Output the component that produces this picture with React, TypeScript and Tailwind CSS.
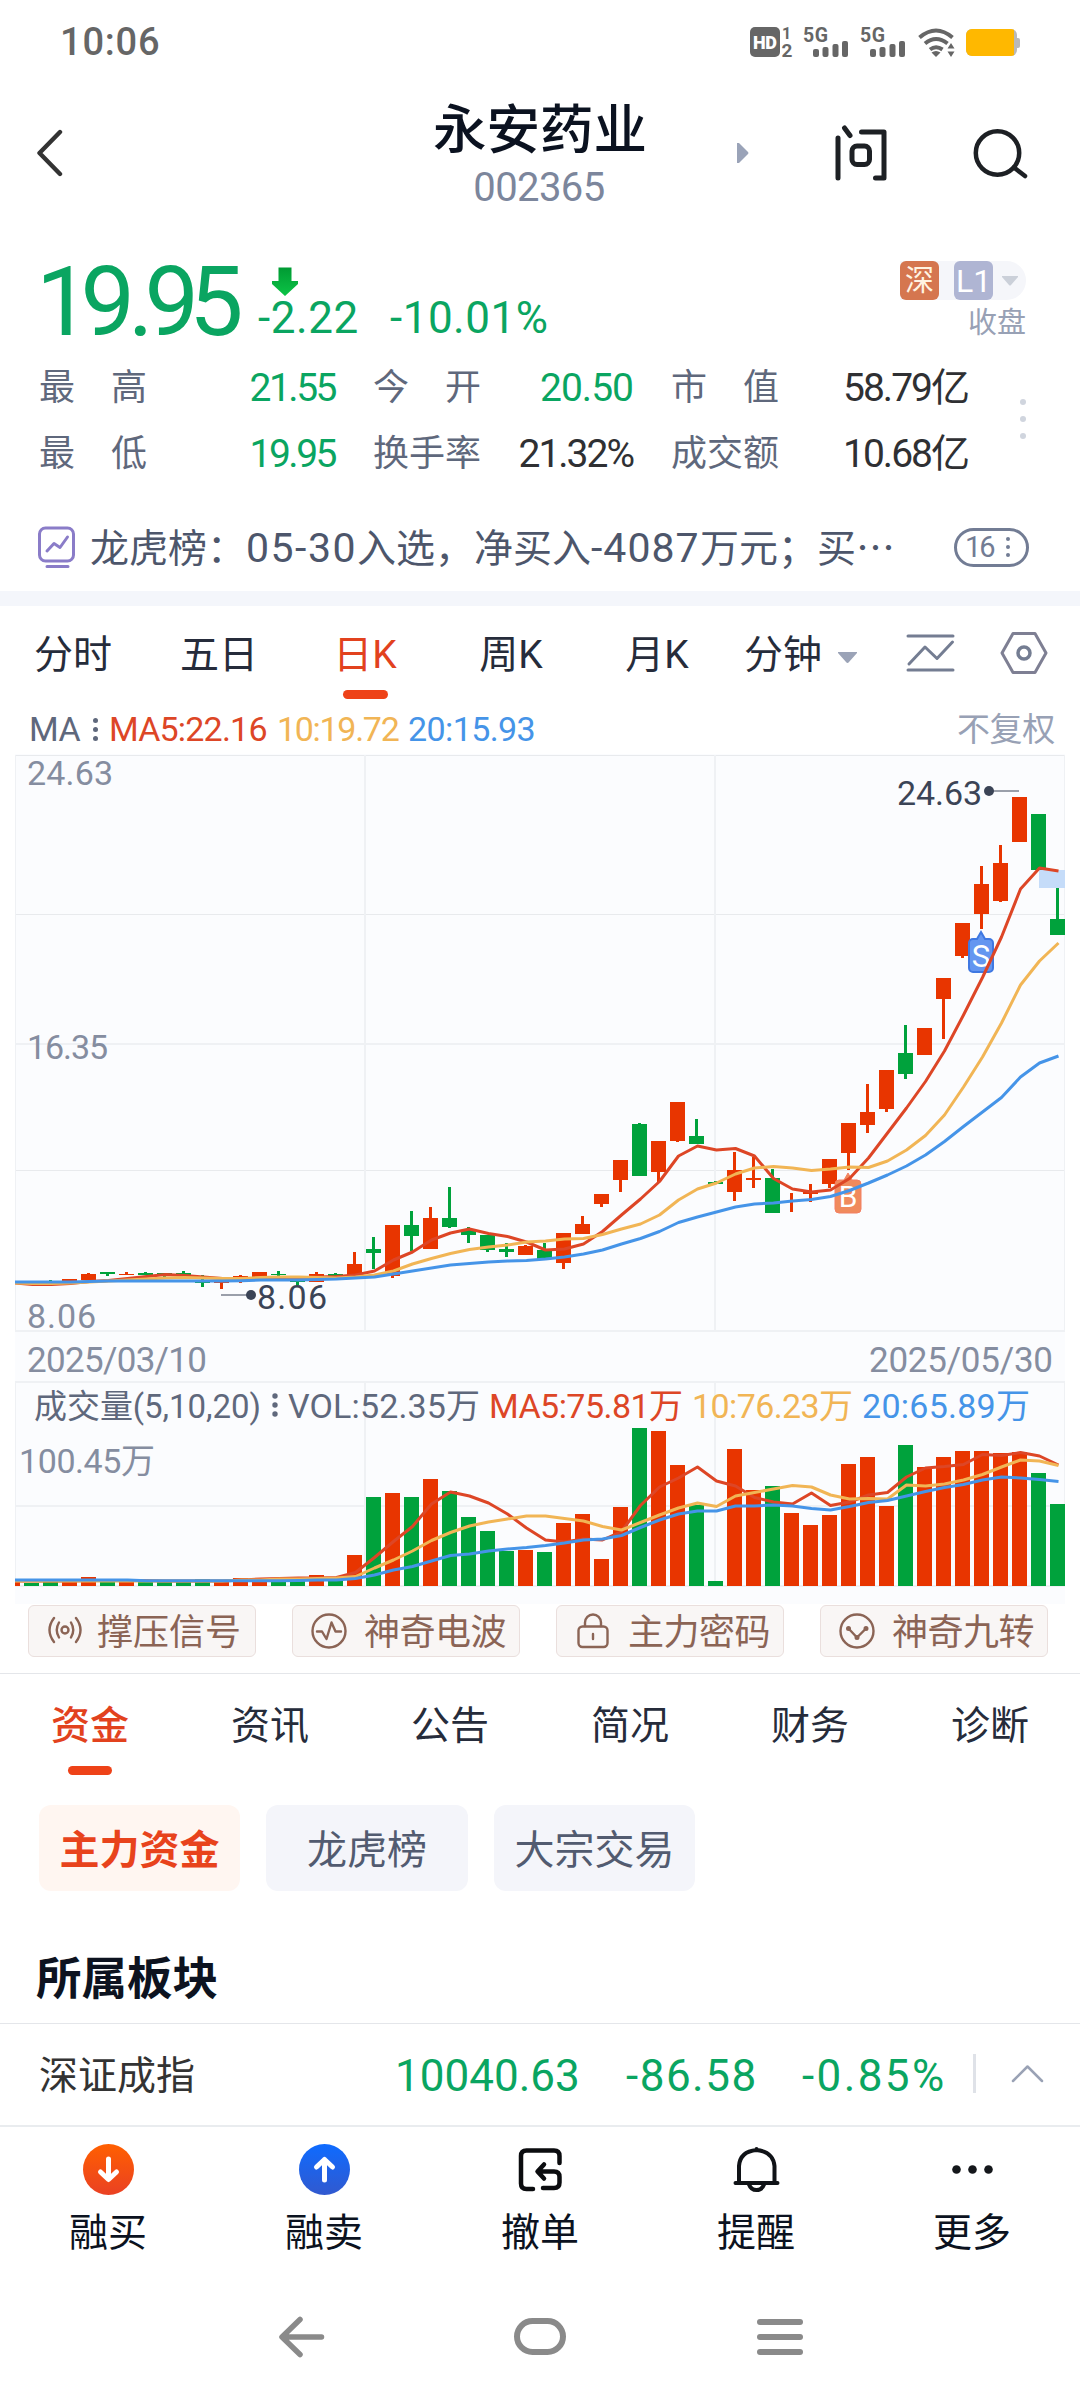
import type { ReactNode } from "react";

type Dir = "r" | "g";
// direction, high, body top, body bottom, low (all in chart y units)
type Candle = [Dir, number, number, number, number];

const UP = "#e83500";
const DOWN = "#00a23c";
const MA5 = "#dd4626";
const MA10 = "#f1b555";
const MA20 = "#4594e8";

const candles: Candle[] = [
  ["r", 1281, 1281, 1283, 1283], ["g", 1281, 1281, 1283, 1283], ["g", 1280, 1281, 1283, 1283], ["r", 1279, 1279, 1283, 1284],
  ["r", 1273, 1274, 1280, 1280], ["g", 1272, 1272, 1274, 1276], ["r", 1272, 1274, 1275, 1275], ["g", 1272, 1273, 1275, 1275],
  ["g", 1273, 1273, 1275, 1277], ["g", 1271, 1273, 1275, 1275], ["g", 1275, 1281, 1283, 1287], ["r", 1281, 1281, 1283, 1289],
  ["r", 1275, 1276, 1278, 1283], ["r", 1272, 1272, 1277, 1277], ["g", 1271, 1274, 1275, 1276], ["g", 1280, 1281, 1282, 1285],
  ["r", 1272, 1274, 1282, 1282], ["g", 1273, 1274, 1276, 1276], ["r", 1252, 1264, 1276, 1276], ["g", 1237, 1249, 1253, 1269],
  ["r", 1225, 1225, 1276, 1278], ["g", 1211, 1225, 1236, 1251], ["r", 1207, 1218, 1249, 1249], ["g", 1187, 1218, 1227, 1228],
  ["g", 1227, 1230, 1235, 1243], ["g", 1235, 1235, 1250, 1252], ["g", 1243, 1249, 1252, 1257], ["r", 1245, 1246, 1255, 1255],
  ["g", 1243, 1250, 1259, 1259], ["r", 1233, 1233, 1263, 1269], ["r", 1216, 1224, 1234, 1234], ["r", 1194, 1194, 1204, 1207],
  ["r", 1160, 1160, 1180, 1192], ["g", 1123, 1124, 1176, 1176], ["r", 1141, 1141, 1172, 1182], ["r", 1102, 1102, 1141, 1142],
  ["g", 1119, 1136, 1144, 1144], ["g", 1181, 1182, 1184, 1184], ["r", 1152, 1170, 1192, 1201], ["r", 1157, 1178, 1180, 1188],
  ["g", 1169, 1178, 1213, 1213], ["r", 1193, 1200, 1202, 1212], ["r", 1184, 1192, 1194, 1202], ["r", 1159, 1159, 1184, 1188],
  ["r", 1123, 1123, 1153, 1170], ["r", 1084, 1112, 1125, 1133], ["r", 1070, 1070, 1109, 1112], ["g", 1025, 1053, 1074, 1079],
  ["r", 1028, 1028, 1055, 1055], ["r", 978, 978, 999, 1039], ["r", 923, 923, 956, 958], ["r", 866, 884, 914, 929],
  ["r", 845, 863, 901, 902], ["r", 797, 797, 842, 842], ["g", 814, 814, 870, 870], ["g", 880, 919, 935, 935],
];

const priceMa5 = [
  1283, 1284.5, 1284.5, 1283.5, 1281.5, 1280.5, 1278.5, 1276.5, 1274.5, 1275.5, 1277, 1278.5, 1278.5, 1279, 1278, 1278, 1277, 1276.5, 1275,
  1271, 1260, 1252, 1240, 1233, 1229, 1233.5, 1236.5, 1242, 1250, 1249, 1244, 1231.5, 1215, 1199, 1181.5, 1156, 1146, 1150, 1148.5, 1156,
  1178.5, 1189, 1192, 1190, 1178.5, 1158, 1133, 1108, 1081.5, 1051, 1015, 977.5, 937, 889, 868, 871,
];
const priceMa10 = [
  1283, 1283.5, 1283.5, 1283, 1282, 1281, 1280, 1279, 1278, 1277.5, 1278, 1278.5, 1278.5, 1277.5, 1277, 1277, 1277.5, 1278, 1277, 1275, 1271,
  1264, 1258.5, 1253.5, 1249.5, 1247, 1245, 1242, 1241, 1239, 1238.5, 1234.5, 1229, 1224, 1215, 1200, 1189, 1183, 1174, 1168, 1166.5, 1168,
  1170.5, 1169, 1167, 1167.5, 1161, 1150, 1135.5, 1115, 1087, 1057, 1023, 985, 961, 943,
];
const priceMa20 = [
  1282, 1282, 1282, 1282, 1281.5, 1281, 1281, 1281, 1281, 1281, 1281, 1281, 1280.7, 1280, 1280, 1280, 1279.5, 1279, 1278, 1277, 1274, 1271,
  1268, 1265, 1263.5, 1262, 1261, 1260.5, 1259, 1257, 1254, 1250, 1244, 1238.5, 1231.5, 1222.5, 1217, 1212, 1207, 1204, 1203, 1201, 1199.5,
  1196.5, 1190.5, 1183, 1175, 1166, 1155, 1141.5, 1126.5, 1112, 1097.5, 1077, 1063, 1056,
];

const volumeTop = [
  1582, 1583, 1582, 1581, 1577, 1582, 1582, 1581, 1582, 1582, 1579, 1580, 1578, 1579, 1580, 1581, 1575, 1580, 1555, 1497, 1493, 1497, 1479,
  1491, 1517, 1531, 1551, 1550, 1552, 1523, 1514, 1559, 1507, 1428, 1431, 1465, 1505, 1581, 1449, 1490, 1486, 1513, 1525, 1515, 1464, 1457,
  1506, 1445, 1467, 1457, 1451, 1451, 1453, 1452, 1473, 1504,
];
const volMa5 = [
  1581, 1581, 1581, 1581, 1580.5, 1580.5, 1580.5, 1580.5, 1581, 1581, 1581, 1581, 1580, 1579, 1578.5, 1578, 1578, 1577.5, 1572.5, 1557.5,
  1541.5, 1526.5, 1504, 1492, 1496, 1503, 1514, 1528, 1540, 1542, 1539, 1540, 1531.5, 1505.5, 1487, 1478, 1467, 1481, 1486, 1497.5, 1502, 1504,
  1493, 1505.5, 1502, 1495, 1492.5, 1477, 1468, 1466.5, 1464.5, 1454.5, 1455.5, 1452.5, 1456, 1465,
];
const volMa10 = [
  1581, 1581, 1581, 1581, 1581, 1581, 1581, 1581, 1581, 1581, 1581, 1581, 1580, 1580, 1579, 1579, 1578.5, 1578, 1576.5, 1568, 1560, 1551,
  1540.5, 1532.5, 1526, 1522, 1519, 1516, 1516, 1518.5, 1521, 1526.5, 1530, 1522.5, 1515, 1508, 1503, 1506.5, 1496, 1492.5, 1489, 1485.5,
  1487, 1495, 1499, 1498.5, 1499, 1485, 1486, 1484, 1480, 1474.5, 1467, 1460, 1461, 1465.5,
];
const volMa20 = [
  1580, 1580, 1580, 1580, 1580, 1580, 1580, 1580.7, 1580.7, 1580.7, 1580.7, 1580.7, 1580.7, 1580.7, 1580.7, 1580.5, 1580, 1580, 1578.5, 1575,
  1570, 1566.5, 1561, 1555.5, 1554, 1551, 1549, 1547.5, 1545.5, 1543, 1540, 1539, 1535.5, 1527.5, 1520, 1514, 1511, 1511, 1506, 1506, 1505,
  1506, 1508.5, 1510, 1506.5, 1502.5, 1500.5, 1496, 1491.5, 1487.5, 1484.5, 1480, 1477, 1478, 1479.5, 1481.5,
];

const cx = (i: number) => 12.5 + 19 * i;
const toPoints = (ys: number[]) => ys.map((y, i) => `${i === 0 ? 15 : cx(i) + 1},${y}`).join(" ");

function Line({ ys, color }: { ys: number[]; color: string }) {
  return <polyline points={toPoints(ys)} fill="none" stroke={color} strokeWidth={3} strokeLinejoin="round" />;
}

interface LabelProps {
  x: number;
  y: number;
  w: number;
  fill: string;
  size?: number;
  children: string;
}

function Label({ x, y, w, fill, size = 34, children }: LabelProps) {
  return (
    <text x={x} y={y} fontSize={size} fill={fill} textLength={w} lengthAdjust="spacing">
      {children}
    </text>
  );
}

function Chart() {
  return (
    <svg width={1080} height={850} viewBox="0 754 1080 850" className="block shrink-0">
      <defs>
        <clipPath id="plot">
          <rect x={15} y={754} width={1050} height={850} />
        </clipPath>
      </defs>
      <rect x={15} y={754} width={1050} height={850} fill="#fbfcfe" />
      <g stroke="#e8eaed" strokeWidth={1}>
        <path d="M15 755.5H1065M15 914.5H1065M15 1170.5H1065" />
        <path d="M15.500 755V1331M1064.500 755V1331M15.500 1382V1586M1064.500 1382V1586" stroke="#eff1f4" />
      </g>
      <path
        d="M15 1044H1065M15 1331H1065M15 1382H1065M15 1506H1065M15 1586H1065M365 755V1331M715 755V1331M365 1382V1586M715 1382V1586"
        stroke="#eff1f4"
        strokeWidth={2}
      />

      <Label x={27} y={785} w={86} fill="#858da0">24.63</Label>
      <Label x={27} y={1059} w={81} fill="#858da0">16.35</Label>
      <Label x={27} y={1328} w={69} fill="#858da0">8.06</Label>
      <Label x={27} y={1372} w={180} fill="#858da0" size={35}>2025/03/10</Label>
      <Label x={869} y={1372} w={184} fill="#858da0" size={35}>2025/05/30</Label>

      <g clipPath="url(#plot)">
        {candles.map(([dir, high, top, bottom, low], i) => (
          <g key={i} fill={dir === "r" ? UP : DOWN}>
            <rect x={cx(i) - 1.5} y={high} width={3} height={low - high} />
            {i !== 41 && <rect x={cx(i) - 7.5} y={top} width={15} height={bottom - top} />}
            <rect x={cx(i) - 7.5} y={volumeTop[i]} width={15} height={1586 - volumeTop[i]} />
          </g>
        ))}
        <rect x={1039} y={870} width={26} height={18} fill="#c5dcf9" />
        <path
          d="M848 1173l4 7h5a4 4 0 0 1 4 4v25a4 4 0 0 1-4 4h-18a4 4 0 0 1-4-4v-25a4 4 0 0 1 4-4h5z"
          fill="#f08a5c"
          stroke="#f37f63"
        />
        <text x={848} y={1207} fontSize={30} fill="#fff" textAnchor="middle">B</text>
        <path
          d="M981 932l4 7h4a4 4 0 0 1 4 4v25a4 4 0 0 1-4 4h-16a4 4 0 0 1-4-4v-25a4 4 0 0 1 4-4h4z"
          fill="#6496f0"
          stroke="#3f78e2"
          strokeWidth={2}
        />
        <text x={981} y={967} fontSize={31} fill="#fff" textAnchor="middle">S</text>
        <Line ys={priceMa5} color={MA5} />
        <Line ys={priceMa10} color={MA10} />
        <Line ys={priceMa20} color={MA20} />
        <Line ys={volMa5} color={MA5} />
        <Line ys={volMa10} color={MA10} />
        <Line ys={volMa20} color={MA20} />
      </g>

      <g fill="#3b4456">
        <path d="M221 1295H247M990 791H1019" stroke="#9a9faa" strokeWidth={2} />
        <circle cx={251} cy={1295} r={5} />
        <circle cx={989} cy={791} r={5} />
      </g>
      <Label x={257} y={1309} w={70} fill="#3b4456">8.06</Label>
      <Label x={897} y={805} w={85} fill="#3b4456">24.63</Label>

      <Label x={34} y={1418} w={227} fill="#5f687c" size={33}>成交量(5,10,20)</Label>
      <g fill="#5f687c">
        <circle cx={275} cy={1396} r={2.700} />
        <circle cx={275} cy={1405} r={2.700} />
        <circle cx={275} cy={1414} r={2.700} />
      </g>
      <Label x={288} y={1418} w={192} fill="#5f687c">VOL:52.35万</Label>
      <Label x={489} y={1418} w={194} fill={MA5}>MA5:75.81万</Label>
      <Label x={692} y={1418} w={161} fill={MA10}>10:76.23万</Label>
      <Label x={862} y={1418} w={168} fill={MA20}>20:65.89万</Label>
      <Label x={19} y={1473} w={136} fill="#858da0">100.45万</Label>
    </svg>
  );
}

function Signal() {
  return (
    <svg width="46" height="34" viewBox="-2 -2 46 34" fill="#666" className="overflow-visible">
      <text x="-1" y="14.500" fontSize="19.500" fontWeight="700" textLength="25">5G</text>
      <rect x="9" y="22" width="6" height="8" rx="2" />
      <rect x="18.500" y="20" width="6" height="10" rx="2" />
      <rect x="28.500" y="17" width="6" height="13" rx="2" />
      <rect x="38" y="14" width="6" height="16" rx="2" />
    </svg>
  );
}

function StatusBar() {
  return (
    <div className="flex h-[84px] shrink-0 items-center pl-[60px]">
      <span className="text-[38px] leading-[40px] font-medium tracking-[0.8px] text-[#666]">10:06</span>
      <div className="ml-auto flex items-center pr-[60px]">
        <svg width="46" height="40" viewBox="0 -4 46 40" fill="#666" className="overflow-visible">
          <rect y="1" width="30" height="30" rx="5" />
          <text x="3" y="22.500" fontSize="18" fontWeight="900" fill="#fff" textLength="24">HD</text>
          <text x="32" y="13" fontSize="16" fontWeight="700">1</text>
          <text x="31.500" y="31" fontSize="19" fontWeight="700">2</text>
        </svg>
        <div className="ml-[6px] flex gap-[11px]">
          <Signal />
          <Signal />
        </div>
        <svg width="37" height="32" viewBox="0 0 37 32" fill="none" stroke="#666" strokeWidth="4" className="ml-[13px]">
          <path d="M1.500 11.500Q18 -2.500 34.500 11.500" />
          <path d="M7 17.500Q18 8.500 29.500 17.500" />
          <path d="M12 23.500Q18 19 24.500 23.500" />
          <path d="M13.500 26.500l4.500 4.500 4.500-4.500q-4.500-3-9 0z" fill="#666" stroke="none" />
          <path d="M33 17l3.500 5.500h-7zM33 31l3.500-5.500h-7z" fill="#666" stroke="none" />
        </svg>
        <div className="ml-[11px] flex items-center pt-px">
          <div className="h-[27px] w-[51px] overflow-hidden rounded-[6px] bg-[#b9b9b9]">
            <div className="h-full w-[48px] bg-[#ffb800]" />
          </div>
          <div className="h-[10px] w-[3px] rounded-r-[2px] bg-[#b9b9b9]" />
        </div>
      </div>
    </div>
  );
}

function Header() {
  return (
    <div className="flex h-[138px] shrink-0 items-center pl-[36px]">
      <svg width="27" height="48" viewBox="0 0 27 48" fill="none" stroke="#333" strokeWidth="4.400" strokeLinecap="round" strokeLinejoin="round">
        <path d="M24 3L3.500 24L24 45" />
      </svg>
      <div className="ml-[368px] w-[218px] pt-[10px] text-center">
        <div className="text-[53.500px] leading-[59px] font-medium whitespace-nowrap text-[#0b1220]">永安药业</div>
        <div className="pr-[2px] text-[40px] leading-[56px] tracking-[-0.6px] text-[#7c869c]">002365</div>
      </div>
      <svg width="12" height="20" viewBox="0 0 12 20" className="ml-[88px]">
        <path d="M0 0h2L11 9Q12 10 11 11L2 20H0z" fill="#9aa3b8" />
      </svg>
      <svg width="52" height="57" viewBox="0 0 52 57" fill="none" stroke="#1d2024" strokeWidth="5" strokeLinecap="round" className="ml-[86px]">
        <path d="M3 13V53M9.500 3L15 10.500" />
        <path d="M26.500 7H49V53H40.500" strokeLinejoin="round" />
        <rect x="17" y="21" width="17.500" height="18.500" rx="5" />
      </svg>
      <svg width="55" height="52" viewBox="0 0 55 52" fill="none" stroke="#1d2024" strokeWidth="4.500" strokeLinecap="round" className="ml-[86px]">
        <circle cx="24.500" cy="26" r="21.700" />
        <path d="M41 40.500L52 49" />
      </svg>
    </div>
  );
}

function Quote() {
  return (
    <div className="flex h-[132px] shrink-0 text-[#0aa561]">
      <div className="mt-[32px] ml-[36px] w-[222px] text-[97px] leading-[97px] tracking-[-10px]">
        19<span className="ml-[3px] tracking-[-9px]">.</span>95
      </div>
      <div className="mt-[44px]">
        <svg width="26" height="30" viewBox="0 0 26 30" className="ml-[14px]">
          <defs>
            <linearGradient id="drop" x1="0" y1="0" x2="0" y2="1">
              <stop offset="0" stopColor="#009a33" />
              <stop offset="1" stopColor="#0cc446" />
            </linearGradient>
          </defs>
          <path d="M6.500 1.500H19.500V15H26V18L13 30L0 18V15H6.500z" fill="url(#drop)" />
        </svg>
        <div className="flex text-[44px] leading-[44px]">
          <span className="w-[132px] tracking-[0.6px]">-2.22</span>
          <span className="tracking-[0.500px]">-10.01%</span>
        </div>
      </div>
      <div className="mt-[39px] mr-[54px] ml-auto flex flex-col items-end">
        <div className="flex h-[39px] items-center rounded-l-[6px] rounded-r-full bg-[#f5f6fa]">
          <div className="h-[39px] w-[39px] rounded-[6px] bg-[#d5764f] text-center text-[29px] leading-[40px] text-[#fff4e2]">深</div>
          <div className="ml-[15px] h-[39px] w-[39px] rounded-[6px] bg-[#afb5d3] text-center text-[32px] leading-[40px] text-white">L1</div>
          <svg width="16" height="10" viewBox="0 0 16 10" className="mr-[8px] ml-[9px]">
            <path d="M0 0H16V1L9 9Q8 10 7 9L0 1z" fill="#cbd0d9" />
          </svg>
        </div>
        <div className="mt-[6px] text-[29px] leading-[34px] text-[#98a1b5]">收盘</div>
      </div>
    </div>
  );
}

interface Stat {
  label: string;
  value: string;
  color: string;
}

function StatGroup({ items, className }: { items: Stat[]; className: string }) {
  return (
    <div className={className}>
      {items.map((s) => (
        <div key={s.label} className="flex h-[66px] items-center justify-between">
          <div className="flex w-[108px] justify-between text-[36px] leading-[40px] text-[#5f687c]">
            {Array.from(s.label).map((c) => (
              <span key={c}>{c}</span>
            ))}
          </div>
          <span className={`text-[39px] leading-[40px] ${s.color}`}>{s.value}</span>
        </div>
      ))}
    </div>
  );
}

function Stats() {
  return (
    <div className="flex h-[132px] shrink-0 items-center pt-[2px] pl-[39px]">
      <StatGroup
        className="w-[296px]"
        items={[
          { label: "最高", value: "21.55", color: "tracking-[-2.500px] text-[#0aa561]" },
          { label: "最低", value: "19.95", color: "tracking-[-2.500px] text-[#0aa561]" },
        ]}
      />
      <StatGroup
        className="ml-[38px] w-[260px]"
        items={[
          { label: "今开", value: "20.50", color: "tracking-[-1px] text-[#0aa561]" },
          { label: "换手率", value: "21.32%", color: "tracking-[-2px] text-[#2f3033]" },
        ]}
      />
      <StatGroup
        className="ml-[38px] w-[297px]"
        items={[
          { label: "市值", value: "58.79亿", color: "tracking-[-2px] text-[#2f3033]" },
          { label: "成交额", value: "10.68亿", color: "tracking-[-2px] text-[#2f3033]" },
        ]}
      />
      <div className="mb-[5px] ml-[52px] flex flex-col gap-[11px]">
        {[0, 1, 2].map((i) => (
          <div key={i} className="h-[6px] w-[6px] rounded-full bg-[#d0d5de]" />
        ))}
      </div>
    </div>
  );
}

function News() {
  return (
    <div className="flex h-[105px] shrink-0 items-center pt-[17px] pl-[37px]">
      <svg width="39" height="43" viewBox="0 0 39 43" fill="none" stroke="#8a7cc8" strokeWidth="3" strokeLinecap="round" strokeLinejoin="round">
        <rect x="2.500" y="2" width="34" height="33" rx="6" />
        <path d="M10 25L17 17.500L23 21.500L30.500 11M10 40.500H31" />
      </svg>
      <div className="ml-[14px] flex items-baseline text-[39px] leading-[44px] whitespace-nowrap text-[#4d566b]">
        <span>龙虎榜：</span>
        <span className="w-[111px] text-[41px] tracking-[1.500px]">05-30</span>
        <span>入选，净买入</span>
        <span className="w-[109px] text-[41px] tracking-[1px]">-4087</span>
        <span className="font-['Noto_Sans_CJK_SC',sans-serif]">万元；买…</span>
      </div>
      <div className="mr-[51px] ml-auto flex h-[39px] w-[75px] items-center rounded-full border-3 border-[#727c94] pl-[8px] text-[#727c94]">
        <span className="text-[29px] leading-[30px] tracking-[-2px]">16</span>
        <div className="ml-[12px] flex flex-col gap-[4px]">
          {[0, 1, 2].map((i) => (
            <div key={i} className="h-[4px] w-[4px] rounded-full bg-[#727c94]" />
          ))}
        </div>
      </div>
    </div>
  );
}

function PeriodTabs() {
  return (
    <div className="flex h-[102px] shrink-0 text-[39px] text-[#262c3b]">
      {["分时", "五日", "日K", "周K", "月K"].map((t) => (
        <div key={t} className={t === "日K" ? "w-[146px] text-[#e2421e]" : "w-[146px]"}>
          <div className="flex h-[84px] items-center justify-center pt-[14px]">{t}</div>
          {t === "日K" && <div className="mx-auto h-[9px] w-[45px] rounded-full bg-[#ee4218]" />}
        </div>
      ))}
      <div className="ml-[14px] flex h-[84px] items-center">
        <span className="pt-[14px]">分钟</span>
        <svg width="19" height="12" viewBox="0 0 19 12" className="mt-[19px] ml-[16px]">
          <path d="M0 0H19V1L11 10Q9.500 12 8 10L0 1z" fill="#9ba3b7" />
        </svg>
        <svg width="49" height="40" viewBox="0 0 49 40" fill="none" stroke="#747d92" strokeWidth="3" strokeLinecap="round" strokeLinejoin="round" className="mt-[10px] ml-[49px]">
          <path d="M2 3H47M2 37H47M3 31L19 14L31 25.500L46.500 9" />
        </svg>
        <svg width="48" height="44" viewBox="0 0 48 44" fill="none" stroke="#7e7f93" strokeWidth="3" strokeLinejoin="round" className="mt-[10px] ml-[45px]">
          <path d="M13 2.500H35L46 22L35 41.500H13L2 22z" />
          <circle cx="24" cy="22" r="6" strokeWidth="3.500" stroke="#747d92" />
        </svg>
      </div>
    </div>
  );
}

function Legend() {
  return (
    <div className="flex h-[46px] shrink-0 items-center pb-[4px] pl-[29px] text-[34px] leading-[40px]">
      <span className="w-[64px] tracking-[-0.500px] text-[#5f687c]">MA</span>
      <div className="flex w-[16px] flex-col gap-[4px]">
        {[0, 1, 2].map((i) => (
          <div key={i} className="h-[5px] w-[5px] rounded-full bg-[#5f687c]" />
        ))}
      </div>
      <span className="w-[168px] tracking-[-0.800px] text-[#dd4626]">MA5:22.16</span>
      <span className="w-[131px] tracking-[-1.300px] text-[#f1b555]">10:19.72</span>
      <span className="tracking-[-0.600px] text-[#4594e8]">20:15.93</span>
      <span className="mr-[25px] ml-auto pt-px text-[33px] tracking-[-0.300px] text-[#98a1b5]">不复权</span>
    </div>
  );
}

const signals: { label: string; icon: ReactNode }[] = [
  {
    label: "撑压信号",
    icon: (
      <>
        <circle cx="18" cy="17" r="3.500" />
        <path d="M12 9.500Q7.500 17 12 24.500M24 9.500Q28.500 17 24 24.500M7 5Q-2 17 7 29M29 5Q38 17 29 29" />
      </>
    ),
  },
  {
    label: "神奇电波",
    icon: (
      <>
        <circle cx="18" cy="18" r="16.500" />
        <path d="M6 18.500H11L15.500 26L20.500 9.500L24.500 18.500H30" />
      </>
    ),
  },
  {
    label: "主力密码",
    icon: (
      <>
        <rect x="3.500" y="13.500" width="29" height="20.500" rx="4" />
        <path d="M10 13V9.500a8 8 0 0 1 16 0V13M18 21V26" />
      </>
    ),
  },
  {
    label: "神奇九转",
    icon: (
      <>
        <circle cx="18" cy="18" r="16.500" />
        <path d="M9.500 15.500L18 24.500L27 15.500" />
        <path d="M9.500 15.500h.01M18 24.500h.01M27 15.500h.01" strokeWidth="5" />
      </>
    ),
  },
];

function SignalButtons() {
  return (
    <div className="flex h-[69px] shrink-0 gap-[36px] pt-[1px] pl-[28px]">
      {signals.map((s) => (
        <div
          key={s.label}
          className="flex h-[52px] w-[228px] items-center rounded-[6px] border border-[#eadfdd] bg-[#f9f6f5] pl-[18px] text-[36px] leading-[44px] whitespace-nowrap text-[#8b6455]"
        >
          <svg width="36" height="36" viewBox="0 0 36 36" fill="none" stroke="#8b6455" strokeWidth="2.400" strokeLinecap="round" strokeLinejoin="round" className="shrink-0">
            {s.icon}
          </svg>
          <span className={s.label === "撑压信号" ? "ml-[14px] pt-[3px]" : "ml-[17px] pt-[3px] tracking-[-0.500px]"}>{s.label}</span>
        </div>
      ))}
    </div>
  );
}

function InfoTabs() {
  return (
    <div className="flex h-[103px] shrink-0 border-t border-[#e4e6ea] text-[39px] text-[#262c3b]">
      {["资金", "资讯", "公告", "简况", "财务", "诊断"].map((t, i) => (
        <div key={t} className="w-[180px]">
          <div className={i === 0 ? "flex h-[92px] items-center justify-center pt-[12px] font-medium text-[#e2421e]" : "flex h-[92px] items-center justify-center pt-[12px]"}>
            {t}
          </div>
          {i === 0 && <div className="mx-auto h-[9px] w-[44px] rounded-full bg-[#ee4218]" />}
        </div>
      ))}
    </div>
  );
}

function Chips() {
  return (
    <div className="mt-[29px] flex h-[86px] shrink-0 gap-[26px] pl-[39px] text-[40px] text-[#525b70]">
      <div className="flex w-[201px] items-center justify-center rounded-[12px] bg-[#fff6f1] pt-[5px] font-bold text-[#e8431c]">主力资金</div>
      <div className="flex w-[202px] items-center justify-center rounded-[12px] bg-[#f4f5fa] pt-[5px]">龙虎榜</div>
      <div className="flex w-[201px] items-center justify-center rounded-[12px] bg-[#f4f5fa] pt-[5px]">大宗交易</div>
    </div>
  );
}

function IndexRow() {
  return (
    <div className="flex h-[102px] shrink-0 items-center border-t border-[#e4e6ea] pl-[39px] text-[44px] text-[#0aa561]">
      <span className="w-[356px] pt-[4px] text-[39px] text-[#333]">深证成指</span>
      <span className="w-[231px] pt-[3px]">10040.63</span>
      <span className="w-[176px] pt-[3px] tracking-[1.500px]">-86.58</span>
      <span className="w-[171px] pt-[3px] tracking-[2.400px]">-0.85%</span>
      <div className="mb-[3px] h-[39px] w-[3px] bg-[#dfe2e8]" />
      <svg width="33" height="19" viewBox="0 0 33 19" fill="none" stroke="#9aa2b5" strokeWidth="2.500" strokeLinecap="round" strokeLinejoin="round" className="mb-[2px] ml-[35px]">
        <path d="M2 17L16.500 2.500L31 17" />
      </svg>
    </div>
  );
}

function TradeIcon({ from, to, id, d }: { from: string; to: string; id: string; d: string }) {
  return (
    <svg width="51" height="51" viewBox="0 0 51 51">
      <defs>
        <linearGradient id={id} x1="0" y1="0" x2="0" y2="1">
          <stop offset="0" stopColor={from} />
          <stop offset="1" stopColor={to} />
        </linearGradient>
      </defs>
      <circle cx="25.500" cy="25.500" r="25.500" fill={`url(#${id})`} />
      <path d={d} fill="none" stroke="#fff" strokeWidth="5" strokeLinecap="round" strokeLinejoin="round" />
    </svg>
  );
}

const actions: { label: string; icon: ReactNode }[] = [
  { label: "融买", icon: <TradeIcon id="buy" from="#ff5f00" to="#ea4123" d="M25.500 15V34.500M17.500 28L25.500 35.500L33.500 28" /> },
  { label: "融卖", icon: <TradeIcon id="sell" from="#0e6bff" to="#3159cf" d="M25.500 36V15.500M17.500 23L25.500 15.500L33.500 23" /> },
  {
    label: "撤单",
    icon: (
      <svg width="51" height="51" viewBox="0 0 51 51" fill="none" stroke="#0b0c0f" strokeWidth="4.500" strokeLinecap="round" strokeLinejoin="round">
        <path d="M18 45H11.500Q6 45 6 39.500V12Q6 6.500 11.500 6.500H39Q44.500 6.500 44.500 12V19" />
        <path d="M29 20.500L22.500 27.500L29 34.500M23 27.500H39Q44.500 27.500 44.500 33V38.500Q44.500 44 39 44H28" />
      </svg>
    ),
  },
  {
    label: "提醒",
    icon: (
      <svg width="51" height="51" viewBox="0 0 51 51" fill="none" stroke="#101317" strokeWidth="4" strokeLinecap="round" strokeLinejoin="round">
        <path d="M4.500 39H46.500M8 38.500V22Q9 7.500 25.500 6Q42 7.500 43.500 22V38.500M25.500 6V5M18 40.500Q20 46 25.500 46Q31 46 33 40.500" />
      </svg>
    ),
  },
  {
    label: "更多",
    icon: (
      <svg width="51" height="51" viewBox="0 0 51 51" fill="#14171b">
        <circle cx="9.500" cy="25.500" r="4.300" />
        <circle cx="25.500" cy="25.500" r="4.300" />
        <circle cx="41.500" cy="25.500" r="4.300" />
      </svg>
    ),
  },
];

function ActionBar() {
  return (
    <div className="grid h-[148px] shrink-0 grid-cols-5 border-t-2 border-[#e9ecef] pt-[17px]">
      {actions.map((a) => (
        <div key={a.label} className="flex flex-col items-center">
          {a.icon}
          <span className="mt-[17px] text-[39px] leading-[42px] text-[#0b1220]">{a.label}</span>
        </div>
      ))}
    </div>
  );
}

function SystemNav() {
  return (
    <div className="flex flex-1 items-center pl-[278px]">
      <svg width="47" height="42" viewBox="0 0 47 42" fill="none" stroke="#8a8a8a" strokeWidth="5.500" strokeLinecap="round" strokeLinejoin="round">
        <path d="M22 3.500L4 21L22 38.500M5 21H43.500" />
      </svg>
      <div className="ml-[189px] h-[37px] w-[52px] rounded-full border-6 border-[#8a8a8a]" />
      <div className="ml-[191px] flex w-[46px] flex-col gap-[9px]">
        <div className="h-[6px] rounded-full bg-[#8a8a8a]" />
        <div className="h-[6px] rounded-full bg-[#8a8a8a]" />
        <div className="h-[6px] rounded-full bg-[#8a8a8a]" />
      </div>
    </div>
  );
}

export default function App() {
  return (
    <div className="flex h-[2400px] w-[1080px] flex-col overflow-hidden bg-white font-['Roboto','Noto_Sans_CJK_SC',sans-serif]">
      <StatusBar />
      <Header />
      <Quote />
      <Stats />
      <News />
      <div className="h-[15px] shrink-0 bg-[#f4f6fb]" />
      <PeriodTabs />
      <Legend />
      <Chart />
      <SignalButtons />
      <InfoTabs />
      <Chips />
      <div className="flex h-[132px] shrink-0 items-center pt-[46px] pl-[36px] text-[45.500px] font-bold text-[#0d1320]">所属板块</div>
      <IndexRow />
      <ActionBar />
      <SystemNav />
    </div>
  );
}
